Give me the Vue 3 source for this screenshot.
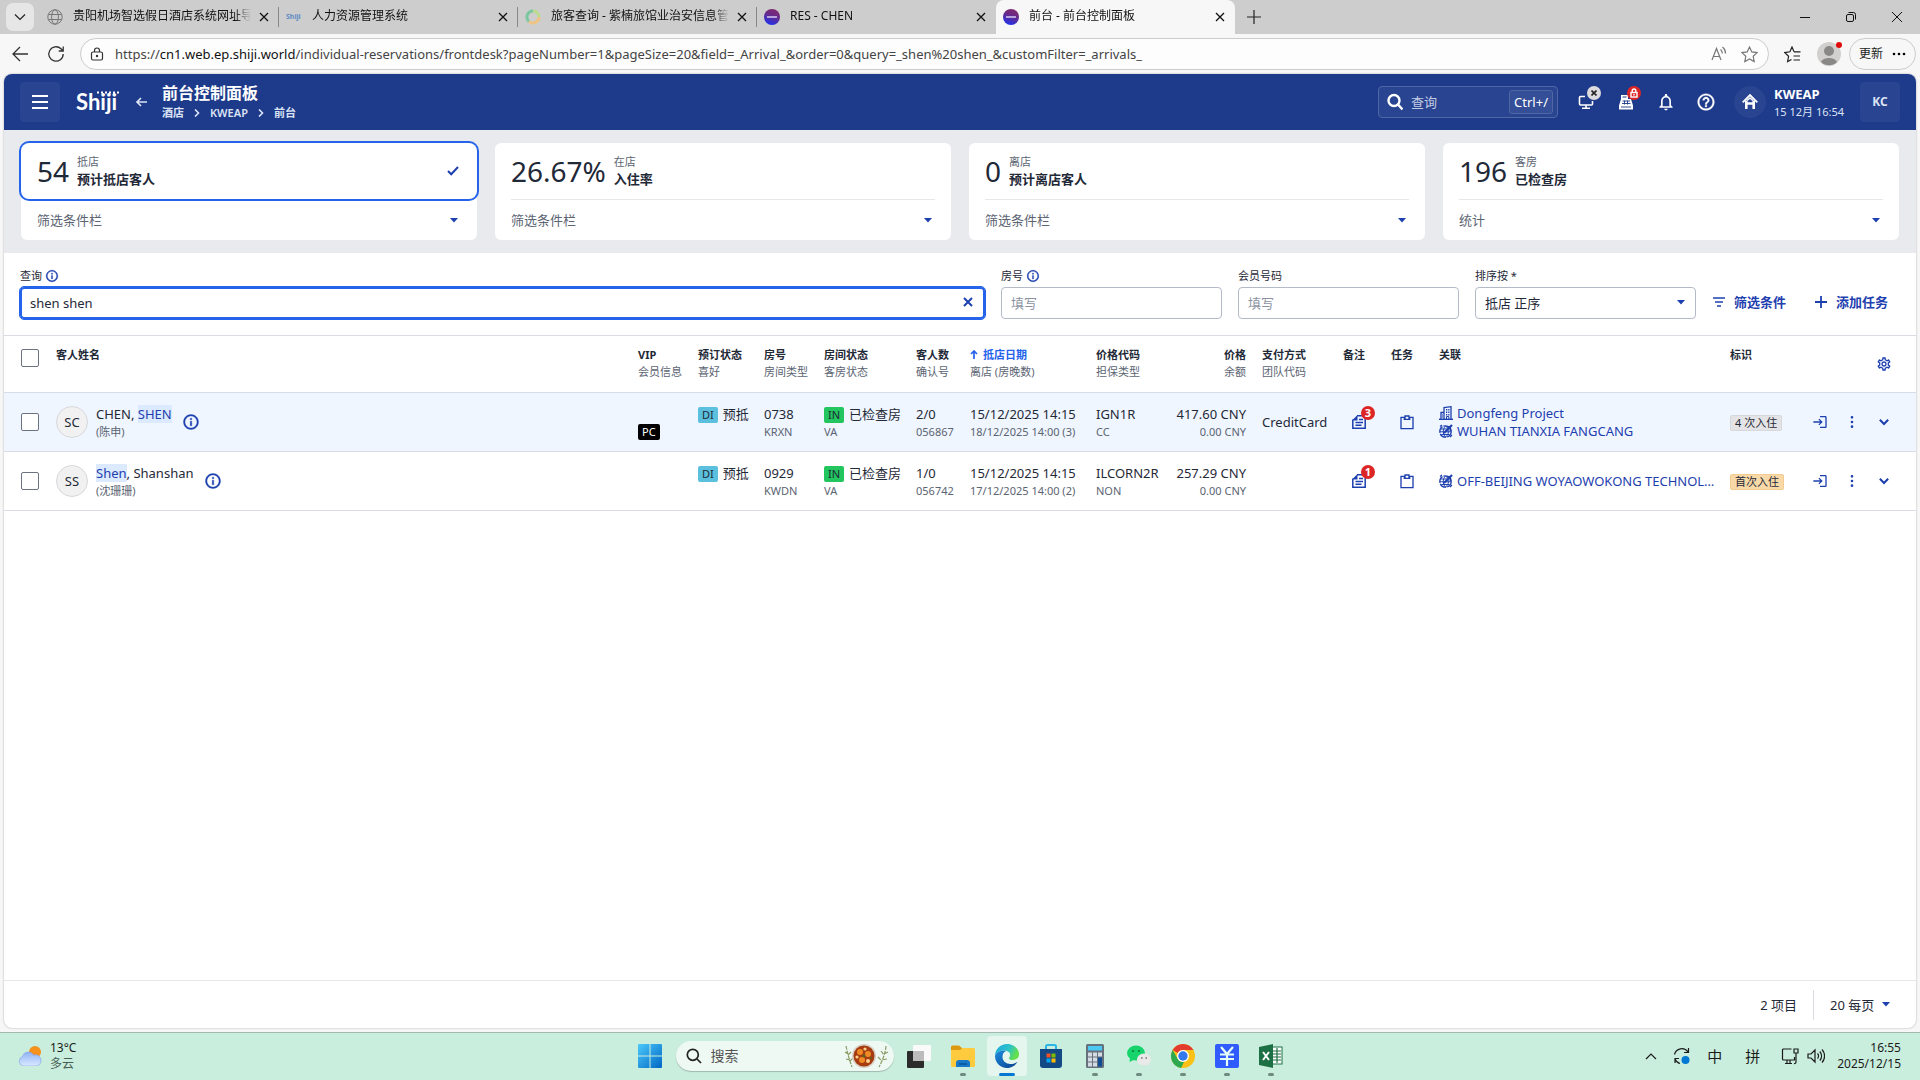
<script setup>
import { ref } from 'vue'

const icons = {
  info: 'M11 7h2v2h-2zm0 4h2v6h-2zm1-9C6.48 2 2 6.48 2 12s4.48 10 10 10 10-4.48 10-10S17.52 2 12 2zm0 18c-4.41 0-8-3.59-8-8s3.59-8 8-8 8 3.59 8 8-3.59 8-8 8z',
  bell: 'M12 22c1.1 0 2-.9 2-2h-4c0 1.1.9 2 2 2zm6-6v-5c0-3.07-1.63-5.64-4.5-6.32V4c0-.83-.67-1.5-1.5-1.5s-1.5.67-1.5 1.5v.68C7.64 5.36 6 7.92 6 11v5l-2 2v1h16v-1l-2-2zm-2 1H8v-6c0-2.48 1.51-4.5 4-4.5s4 2.02 4 4.5v6z',
  help: 'M11 16h2v2h-2zm1-14C6.48 2 2 6.48 2 12s4.48 10 10 10 10-4.48 10-10S17.52 2 12 2zm0 18c-4.41 0-8-3.59-8-8s3.59-8 8-8 8 3.59 8 8-3.59 8-8 8zm0-14c-2.21 0-4 1.79-4 4h2c0-1.1.9-2 2-2s2 .9 2 2c0 2-3 1.75-3 5h2c0-2.25 3-2.5 3-5 0-2.21-1.79-4-4-4z',
  gear: 'M19.43 12.98c.04-.32.07-.64.07-.98 0-.34-.03-.66-.07-.98l2.11-1.65c.19-.15.24-.42.12-.64l-2-3.46c-.09-.16-.26-.25-.44-.25-.06 0-.12.01-.17.03l-2.49 1c-.52-.4-1.08-.73-1.69-.98l-.38-2.65C14.46 2.18 14.25 2 14 2h-4c-.25 0-.46.18-.49.42l-.38 2.65c-.61.25-1.17.59-1.69.98l-2.49-1c-.06-.02-.12-.03-.18-.03-.17 0-.34.09-.43.25l-2 3.46c-.13.22-.07.49.12.64l2.11 1.65c-.04.32-.07.65-.07.98 0 .33.03.66.07.98l-2.11 1.65c-.19.15-.24.42-.12.64l2 3.46c.09.16.26.25.44.25.06 0 .12-.01.17-.03l2.49-1c.52.4 1.08.73 1.69.98l.38 2.65c.03.24.24.42.49.42h4c.25 0 .46-.18.49-.42l.38-2.65c.61-.25 1.17-.59 1.69-.98l2.49 1c.06.02.12.03.18.03.17 0 .34-.09.43-.25l2-3.46c.12-.22.07-.49-.12-.64l-2.11-1.65zm-1.98-1.71c.04.31.05.52.05.73 0 .21-.02.43-.05.73l-.14 1.13.89.7 1.08.84-.7 1.21-1.27-.51-1.04-.42-.9.68c-.43.32-.84.56-1.25.73l-1.06.43-.16 1.13-.2 1.35h-1.4l-.19-1.35-.16-1.13-1.06-.43c-.43-.18-.83-.41-1.23-.71l-.91-.7-1.06.43-1.27.51-.7-1.21 1.08-.84.89-.7-.14-1.13c-.03-.31-.05-.54-.05-.74s.02-.43.05-.73l.14-1.13-.89-.7-1.08-.84.7-1.21 1.27.51 1.04.42.9-.68c.43-.32.84-.56 1.25-.73l1.06-.43.16-1.13.2-1.35h1.39l.19 1.35.16 1.13 1.06.43c.43.18.83.41 1.23.71l.91.7 1.06-.43 1.27-.51.7 1.21-1.07.85-.89.7.14 1.13zM12 8c-2.21 0-4 1.79-4 4s1.79 4 4 4 4-1.79 4-4-1.79-4-4-4zm0 6c-1.1 0-2-.9-2-2s.9-2 2-2 2 .9 2 2-.9 2-2 2z',
  clipboard: 'M2 4h6V2h8v2h6v19H2zM4 6v15h16V6h-3v3H7V6zM10 4v3h4V4z',
  login: 'M11 7 9.600 8.400l2.600 2.600H2v2h10.200l-2.600 2.600L11 17l5-5-5-5zm9 12h-8v2h8c1.100 0 2-.9 2-2V5c0-1.100-.9-2-2-2h-8v2h8v14z',
  chevron: 'M7.400 8 12 12.600 16.600 8 18.500 10 12 16.500 5.500 10z',
  more: 'M12 7a2 2 0 1 0 0-4 2 2 0 0 0 0 4zm0 3a2 2 0 1 0 0 4 2 2 0 0 0 0-4zm0 7a2 2 0 1 0 0 4 2 2 0 0 0 0-4z',
}

const tabs = [
  { title: '贵阳机场智选假日酒店系统网址导航', icon: 'globe' },
  { title: '人力资源管理系统', icon: 'word' },
  { title: '旅客查询 - 紫楠旅馆业治安信息管理系统', icon: 'ring' },
  { title: 'RES - CHEN', icon: 'disc' },
  { title: '前台 - 前台控制面板', icon: 'disc', active: true },
]

const stats = [
  { value: '54', group: '抵店', name: '预计抵店客人', more: '筛选条件栏' },
  { value: '26.67%', group: '在店', name: '入住率', more: '筛选条件栏' },
  { value: '0', group: '离店', name: '预计离店客人', more: '筛选条件栏' },
  { value: '196', group: '客房', name: '已检查房', more: '统计' },
]
const activeStat = ref(0)

const columns = [
  { key: 'vip', top: 'VIP', sub: '会员信息', width: 60 },
  { key: 'status', top: '预订状态', sub: '喜好', width: 66 },
  { key: 'room', top: '房号', sub: '房间类型', width: 60 },
  { key: 'roomStatus', top: '房间状态', sub: '客房状态', width: 92 },
  { key: 'guests', top: '客人数', sub: '确认号', width: 54 },
  { key: 'arrival', top: '抵店日期', sub: '离店 (房晚数)', width: 126, sorted: true },
  { key: 'code', top: '价格代码', sub: '担保类型', width: 76 },
  { key: 'price', top: '价格', sub: '余额', width: 90, right: true },
  { key: 'payment', top: '支付方式', sub: '团队代码', width: 81 },
  { key: 'notes', top: '备注', width: 48 },
  { key: 'tasks', top: '任务', width: 48 },
  { key: 'links', top: '关联', width: 291 },
  { key: 'tags', top: '标识', width: 74 },
]

const rows = [
  {
    id: '056867',
    initials: 'SC',
    name: [{ text: 'CHEN, ' }, { text: 'SHEN', hit: true }],
    localName: '(陈申)',
    vip: 'PC',
    room: '0738',
    roomType: 'KRXN',
    guests: '2/0',
    arrival: '15/12/2025 14:15',
    departure: '18/12/2025 14:00 (3)',
    code: 'IGN1R',
    guarantee: 'CC',
    price: '417.60 CNY',
    payment: 'CreditCard',
    notes: 3,
    links: [
      { icon: 'company', text: 'Dongfeng Project' },
      { icon: 'agent', text: 'WUHAN TIANXIA FANGCANG' },
    ],
    tag: '4 次入住',
    selected: true,
  },
  {
    id: '056742',
    initials: 'SS',
    name: [{ text: 'Shen', hit: true }, { text: ', Shanshan' }],
    localName: '(沈珊珊)',
    room: '0929',
    roomType: 'KWDN',
    guests: '1/0',
    arrival: '15/12/2025 14:15',
    departure: '17/12/2025 14:00 (2)',
    code: 'ILCORN2R',
    guarantee: 'NON',
    price: '257.29 CNY',
    payment: '',
    notes: 1,
    links: [{ icon: 'agent', text: 'OFF-BEIJING WOYAOWOKONG TECHNOLOGY' }],
    tag: '首次入住',
    firstStay: true,
  },
]

const query = ref('shen shen')
const roomNo = ref('')
const memberNo = ref('')
</script>

<template>
  <div class="desktop">
    <div class="tabbar">
      <button class="tab-menu" aria-label="tabs">
        <svg width="12" height="12" viewBox="0 0 12 12"><path d="M1 3.500l5 5 5-5" fill="none" stroke="#222" stroke-width="1.200" /></svg>
      </button>
      <div v-for="(tab, i) in tabs" :key="i" class="tab" :class="{ active: tab.active, nosep: i > 2 }">
        <svg v-if="tab.icon === 'globe'" width="16" height="16" viewBox="0 0 16 16" fill="none" stroke="#777">
          <circle cx="8" cy="8" r="7.200" />
          <ellipse cx="8" cy="8" rx="3.400" ry="7.200" />
          <path d="M1.500 5.500h13M1.500 10.500h13" />
        </svg>
        <span v-else-if="tab.icon === 'word'" class="fav-word">Shiji</span>
        <svg v-else-if="tab.icon === 'ring'" width="16" height="16" viewBox="0 0 16 16" fill="none" stroke-width="3">
          <path d="M8 2a6 6 0 0 0-4 10.500" stroke="#7cc7a0" />
          <path d="M4 12.500A6 6 0 0 0 14 8" stroke="#efc384" />
          <path d="M14 8A6 6 0 0 0 8 2" stroke="#b9dc8e" />
        </svg>
        <span v-else class="fav-disc"></span>
        <span class="tab-title">{{ tab.title }}</span>
        <button class="tab-close" aria-label="close">
          <svg width="10" height="10" viewBox="0 0 10 10"><path d="M1 1l8 8M9 1L1 9" stroke="#111" stroke-width="1.300" /></svg>
        </button>
      </div>
      <button class="tab-new" aria-label="new tab">
        <svg width="14" height="14" viewBox="0 0 14 14"><path d="M7 0v14M0 7h14" stroke="#222" stroke-width="1.200" /></svg>
      </button>
      <div class="win-buttons">
        <button aria-label="minimize"><svg width="10" height="10" viewBox="0 0 10 10"><path d="M0 5.500h10" stroke="#111" /></svg></button>
        <button aria-label="restore">
          <svg width="10" height="10" viewBox="0 0 10 10" fill="none" stroke="#111"><rect x=".5" y="2.500" width="7" height="7" rx="1.500" /><path d="M2.500.5H7.500a2 2 0 0 1 2 2V7.500" /></svg>
        </button>
        <button aria-label="close"><svg width="10" height="10" viewBox="0 0 10 10"><path d="M0 0l10 10M10 0L0 10" stroke="#111" /></svg></button>
      </div>
    </div>

    <div class="toolbar">
      <button class="nav-btn" aria-label="back">
        <svg width="16" height="16" viewBox="0 0 16 16" fill="none" stroke="#333" stroke-width="1.300"><path d="M16 8H1M8 1L1 8l7 7" /></svg>
      </button>
      <button class="nav-btn" aria-label="reload">
        <svg width="18" height="18" viewBox="0 0 18 18" fill="none" stroke="#333" stroke-width="1.300"><path d="M16.200 9A7.200 7.200 0 1 1 14 3.800L16 5.800M16.200 1.500v4.500h-4.500" /></svg>
      </button>
      <div class="address">
        <svg width="14" height="14" viewBox="0 0 14 14" fill="none" stroke="#333" stroke-width="1.200"><rect x="1.500" y="5" width="11" height="8" rx="1.500" /><path d="M4.500 5V3.500a2.500 2.500 0 0 1 5 0V5" /><circle cx="7" cy="9" r=".6" fill="#333" /></svg>
        <span class="url">https://<b>cn1.web.ep.shiji.world</b>/individual-reservations/frontdesk?pageNumber=1&amp;pageSize=20&amp;field=_Arrival_&amp;order=0&amp;query=_shen%20shen_&amp;customFilter=_arrivals_</span>
        <svg width="16" height="16" viewBox="0 0 16 16" fill="none" stroke="#777" stroke-width="1.200"><path d="M1 14L5.500 2.500 10 14M2.500 10.500h6M9.500 3.500a5 5 0 0 1 1.800 4M11.500 1a8 8 0 0 1 3 6.500" /></svg>
        <svg width="17" height="17" viewBox="0 0 17 17" fill="none" stroke="#777" stroke-width="1.200"><path d="M8.500 1l2.300 4.900 5.300.7-3.900 3.700 1 5.300-4.700-2.600-4.700 2.600 1-5.300L.9 6.600l5.300-.7z" /></svg>
      </div>
      <button class="favorites" aria-label="favorites">
        <svg width="17" height="17" viewBox="0 0 17 17" fill="none" stroke="#222" stroke-width="1.200"><path d="M10 5.800L8 1 5.900 5.800.8 6.600l3.800 3.700-1 5.300 3.900-2.100M10 5.800h6.500M9.500 10h6.500M9.500 14h6.500" /></svg>
      </button>
      <button class="profile" aria-label="profile">
        <svg width="24" height="24" viewBox="0 0 24 24"><circle cx="12" cy="12" r="12" fill="#d2d0ce" /><circle cx="12" cy="9" r="5" fill="#8a8886" /><path d="M4 20a8.500 6 0 0 1 16 0 11.500 11.500 0 0 1-16 0z" fill="#8a8886" /></svg>
        <span class="dot"></span>
      </button>
      <button class="update">更新
        <svg width="14" height="4" viewBox="0 0 14 4"><circle cx="2" cy="2" r="1.300" /><circle cx="7" cy="2" r="1.300" /><circle cx="12" cy="2" r="1.300" /></svg>
      </button>
    </div>

    <div class="page">
      <header class="app-header">
        <button class="square" aria-label="menu">
          <svg width="16" height="16" viewBox="0 0 16 16"><path d="M0 2h16M0 8h16M0 14h16" stroke="#fff" stroke-width="2" /></svg>
        </button>
        <div class="logo">
          Shiji
          <svg width="24" height="3" viewBox="0 0 24 3"><path d="M1 1.500h23" stroke="#fff" stroke-width="2" stroke-dasharray="2 2" /></svg>
        </div>
        <button class="back" aria-label="back">
          <svg width="12" height="10" viewBox="0 0 12 10"><path d="M12 5H2M6 1L2 5l4 4" fill="none" stroke="#dbe3f5" stroke-width="1.700" /></svg>
        </button>
        <div class="heading">
          <h1>前台控制面板</h1>
          <nav>
            <a href="#">酒店</a>
            <svg width="6" height="8" viewBox="0 0 6 8"><path d="M1 .5L4.500 4 1 7.500" /></svg>
            <a href="#">KWEAP</a>
            <svg width="6" height="8" viewBox="0 0 6 8"><path d="M1 .5L4.500 4 1 7.500" /></svg>
            <a href="#">前台</a>
          </nav>
        </div>
        <label class="head-search">
          <svg width="16" height="18" viewBox="0 0 16 18" fill="none" stroke="#fff" stroke-width="2.400"><circle cx="7" cy="7.500" r="5.500" /><path d="M11 11.500l4.500 5" /></svg>
          <input type="text" placeholder="查询" aria-label="查询" />
          <kbd>Ctrl+/</kbd>
        </label>
        <div class="head-icons">
          <button aria-label="devices">
            <svg width="16" height="16" viewBox="0 0 16 16" fill="none" stroke="#fff" stroke-width="1.600"><path d="M7 2.500H2.500a1 1 0 0 0-1 1v6.500a1 1 0 0 0 1 1h11a1 1 0 0 0 1-1V7M8 11v3M4 14.200h8" /></svg>
            <span class="mark grey"><svg width="6" height="6" viewBox="0 0 6 6"><path d="M.5.5l5 5M5.500.5l-5 5" stroke="#222" stroke-width="1.600" /></svg></span>
          </button>
          <button aria-label="cashier">
            <svg width="16" height="16" viewBox="0 0 16 16"><path d="M3 1h7v4h3l2 6.500V15.500H1v-4L3 5z" fill="#fff" /><path d="M4.500 3h4" stroke="#1e3a8a" stroke-width="1" /><path d="M4.500 7h7.500M4 9.500h8.500M6.500 6.500v4M9.500 6.500v4M3 13h10" stroke="#1e3a8a" stroke-width=".9" /></svg>
            <span class="mark red"><svg width="8" height="10" viewBox="0 0 8 10" fill="none" stroke="#fff" stroke-width="1.400"><path d="M2.200 4.500V2.800a1.800 1.800 0 0 1 3.600 0v1.700" /><rect x="1" y="4.500" width="6" height="4.500" /><path d="M4 6v1.500" /></svg></span>
          </button>
          <button aria-label="notifications"><svg width="20" height="20" viewBox="0 0 24 24" fill="#fff"><path :d="icons.bell" /></svg></button>
          <button aria-label="help"><svg width="20" height="20" viewBox="0 0 24 24" fill="#fff"><path :d="icons.help" stroke="#fff" stroke-width=".4" /></svg></button>
        </div>
        <div class="hotel">
          <span class="home"><svg width="16" height="16" viewBox="0 0 16 16" fill="none" stroke="#fff"><path d="M.7 8.300L8 1l7.300 7.300" stroke-width="1.800" /><path d="M4.300 6.500V15M11.700 6.500V15M4 9.500h8" stroke-width="2.600" /><path d="M5 6.500L8 4l3 2.500" stroke-width="1.600" /></svg></span>
          <span class="hotel-text"><b>KWEAP</b><span>15 12月 16:54</span></span>
        </div>
        <button class="square user">KC</button>
      </header>

      <section class="stats">
        <article v-for="(s, i) in stats" :key="s.name" class="stat" :class="{ chosen: activeStat === i }">
          <button class="stat-main" @click="activeStat = i">
            <span class="value">{{ s.value }}</span>
            <span class="stat-text"><span>{{ s.group }}</span><b>{{ s.name }}</b></span>
            <svg v-if="activeStat === i" width="12" height="10" viewBox="0 0 12 10"><path d="M1 5l3.200 3.200L11 1" fill="none" stroke="#1e40af" stroke-width="2" /></svg>
          </button>
          <button class="stat-more">
            {{ s.more }}
            <svg width="8" height="5" viewBox="0 0 8 5"><path d="M0 0h8L4 4.500z" fill="#1e40af" /></svg>
          </button>
        </article>
      </section>

      <form class="filters" @submit.prevent>
        <div class="field wide">
          <label for="query">查询 <svg width="14" height="14" viewBox="0 0 24 24" fill="#1e40af"><path :d="icons.info" stroke="#1e40af" stroke-width=".6" /></svg></label>
          <div class="search-box">
            <input id="query" v-model="query" type="text" />
            <button type="button" aria-label="clear" @click="query = ''">
              <svg width="10" height="10" viewBox="0 0 10 10"><path d="M1 1l8 8M9 1L1 9" stroke="#1e40af" stroke-width="2" /></svg>
            </button>
          </div>
        </div>
        <div class="field">
          <label for="room">房号 <svg width="14" height="14" viewBox="0 0 24 24" fill="#1e40af"><path :d="icons.info" stroke="#1e40af" stroke-width=".6" /></svg></label>
          <input id="room" v-model="roomNo" type="text" placeholder="填写" />
        </div>
        <div class="field">
          <label for="member">会员号码</label>
          <input id="member" v-model="memberNo" type="text" placeholder="填写" />
        </div>
        <div class="field">
          <label for="sort">排序按 *</label>
          <div class="select-box">
            <select id="sort"><option>抵店 正序</option></select>
            <svg width="8" height="5" viewBox="0 0 8 5"><path d="M0 0h8L4 4.500z" fill="#1e40af" /></svg>
          </div>
        </div>
        <div class="form-actions">
          <button type="button">
            <svg width="14" height="14" viewBox="0 0 14 14"><path d="M1 3h12M3 7h8M5 11h4" stroke="#1e40af" stroke-width="1.600" /></svg>
            筛选条件
          </button>
          <button type="button">
            <svg width="14" height="14" viewBox="0 0 14 14"><path d="M7 1v12M1 7h12" stroke="#1e40af" stroke-width="1.800" /></svg>
            添加任务
          </button>
        </div>
      </form>

      <table class="grid">
        <colgroup>
          <col style="width: 52px" />
          <col />
          <col v-for="c in columns" :key="c.key" :style="{ width: c.width + 'px' }" />
          <col style="width: 112px" />
        </colgroup>
        <thead>
          <tr>
            <th class="tick"><input type="checkbox" aria-label="select all" /></th>
            <th><b>客人姓名</b></th>
            <th v-for="c in columns" :key="c.key" :class="{ right: c.right, sorted: c.sorted }">
              <b>
                <svg v-if="c.sorted" width="8" height="9" viewBox="0 0 8 9"><path d="M4 9V1M1 4l3-3 3 3" fill="none" stroke="#2563eb" stroke-width="1.700" /></svg>
                {{ c.top }}
              </b>
              <span v-if="c.sub">{{ c.sub }}</span>
            </th>
            <th class="gear"><button aria-label="columns"><svg width="16" height="16" viewBox="0 0 24 24" fill="#1e40af"><path :d="icons.gear" /></svg></button></th>
          </tr>
        </thead>
        <tbody>
          <tr v-for="row in rows" :key="row.id" :class="{ selected: row.selected }">
            <td class="tick"><input type="checkbox" :aria-label="row.initials" /></td>
            <td>
              <div class="guest">
                <span class="avatar">{{ row.initials }}</span>
                <div>
                  <p class="main"><span v-for="part in row.name" :key="part.text" :class="{ hit: part.hit }">{{ part.text }}</span></p>
                  <p class="sub">{{ row.localName }}</p>
                </div>
                <button aria-label="guest info"><svg width="18" height="18" viewBox="0 0 24 24" fill="#1e40af"><path :d="icons.info" stroke="#1e40af" stroke-width=".5" /></svg></button>
              </div>
            </td>
            <td>
              <p class="main"></p>
              <p class="sub"><span v-if="row.vip" class="chip vip">{{ row.vip }}</span></p>
            </td>
            <td>
              <p class="main"><span class="chip due">DI</span>预抵</p>
              <p class="sub"></p>
            </td>
            <td>
              <p class="main">{{ row.room }}</p>
              <p class="sub">{{ row.roomType }}</p>
            </td>
            <td>
              <p class="main"><span class="chip in">IN</span>已检查房</p>
              <p class="sub">VA</p>
            </td>
            <td>
              <p class="main">{{ row.guests }}</p>
              <p class="sub">{{ row.id }}</p>
            </td>
            <td>
              <p class="main">{{ row.arrival }}</p>
              <p class="sub">{{ row.departure }}</p>
            </td>
            <td>
              <p class="main">{{ row.code }}</p>
              <p class="sub">{{ row.guarantee }}</p>
            </td>
            <td class="right">
              <p class="main">{{ row.price }}</p>
              <p class="sub">0.00 CNY</p>
            </td>
            <td><p class="main">{{ row.payment }}</p></td>
            <td>
              <button class="cell-btn" aria-label="notes">
                <svg width="16" height="16" viewBox="0 0 16 16" fill="none" stroke="#1e40af" stroke-width="1.500">
                  <path d="M6 1.800h8.200v12.400H1.800V5.500" />
                  <path d="M6.500 1v5.500H1z" fill="#1e40af" stroke="none" />
                  <path d="M8 5.500h4M4.500 8.500H12M4.500 11.200h6" stroke-width="1.400" />
                </svg>
                <span class="count">{{ row.notes }}</span>
              </button>
            </td>
            <td>
              <button class="cell-btn" aria-label="tasks"><svg width="16" height="16" viewBox="0 0 24 24" fill="#1e40af" fill-rule="evenodd"><path :d="icons.clipboard" /></svg></button>
            </td>
            <td>
              <a v-for="l in row.links" :key="l.text" href="#" class="relation">
                <svg v-if="l.icon === 'company'" width="14" height="14" viewBox="0 0 14 14" fill="none" stroke="#1e40af">
                  <path d="M0 13.300h14" stroke-width="1.400" />
                  <path d="M5 13V1.500L12 .7V13M2 13V6.500h3" stroke-width="1.300" />
                  <path d="M7 3.700h1.300M9.200 3.700h1.300M7 6.200h1.300M9.200 6.200h1.300M7 8.700h1.300M9.200 8.700h1.300" stroke-width="1.400" />
                  <path d="M7.500 13v-2.500h2.300V13M3 9h1M3 11h1" />
                </svg>
                <svg v-else width="14" height="14" viewBox="0 0 14 14" fill="none" stroke="#1e40af">
                  <circle cx="6.500" cy="7.500" r="5.700" stroke-width="1.300" stroke-dasharray="7 1" />
                  <path d="M2 5h7M1 7.800h11M2.500 10.500h8M6.500 2C3.500 5 3.500 10 6.500 13M9 5.500c1 3 0 6-2.500 7.500" />
                  <path d="M5 9L13 1" stroke-width="2.200" />
                  <path d="M7.500 2.800l3.500.4.600 3.800" stroke-width="1.800" />
                  <path d="M1 2.500L3 1M11 13l2-2" stroke-width="1.200" />
                </svg>
                <span>{{ l.text }}</span>
              </a>
            </td>
            <td><span class="tag" :class="{ first: row.firstStay }">{{ row.tag }}</span></td>
            <td>
              <div class="row-actions">
                <button aria-label="check in"><svg width="16" height="16" viewBox="0 0 24 24" fill="#1e40af"><path :d="icons.login" /></svg></button>
                <button aria-label="more"><svg width="16" height="16" viewBox="0 0 24 24" fill="#1e40af"><path :d="icons.more" /></svg></button>
                <button aria-label="expand"><svg width="18" height="18" viewBox="0 0 24 24" fill="#1e40af"><path :d="icons.chevron" /></svg></button>
              </div>
            </td>
          </tr>
        </tbody>
      </table>

      <footer class="pager">
        <span>2 项目</span>
        <div class="page-size">
          <select aria-label="page size"><option>20 每页</option></select>
          <svg width="8" height="5" viewBox="0 0 8 5"><path d="M0 0h8L4 4.500z" fill="#1e40af" /></svg>
        </div>
      </footer>
    </div>

    <div class="taskbar">
      <div class="weather">
        <svg width="24" height="20" viewBox="0 0 24 20">
          <defs>
            <linearGradient id="cloud" x1="0" y1="0" x2="0" y2="1"><stop offset="0" stop-color="#8fb2f5" /><stop offset="1" stop-color="#dbe9ff" /></linearGradient>
          </defs>
          <circle cx="17" cy="6" r="6" fill="#f5921e" />
          <path d="M5 20a5 5 0 0 1-.5-9.500A6 6 0 0 1 15.500 9 5.500 5.500 0 0 1 19 20z" fill="url(#cloud)" stroke="#7da0ea" stroke-width=".6" />
        </svg>
        <div><p>13°C</p><p class="dim">多云</p></div>
      </div>

      <div class="dock">
        <button aria-label="start">
          <svg width="24" height="24" viewBox="0 0 24 24">
            <defs><linearGradient id="win" x1="0" y1="0" x2="1" y2="1"><stop offset="0" stop-color="#4cc9fa" /><stop offset="1" stop-color="#0067c5" /></linearGradient></defs>
            <path d="M0 1a1 1 0 0 1 1-1h10.500v11.500H0zM12.500 0H23a1 1 0 0 1 1 1v10.500H12.500zM0 12.500h11.500V24H1a1 1 0 0 1-1-1zM12.500 12.500H24V23a1 1 0 0 1-1 1H12.500z" fill="url(#win)" />
          </svg>
        </button>
        <label class="task-search">
          <svg width="16" height="16" viewBox="0 0 16 16" fill="none" stroke="#222" stroke-width="1.700"><circle cx="6.800" cy="6.800" r="5.500" /><path d="M11 11l4 4" /></svg>
          <input type="text" placeholder="搜索" aria-label="搜索" />
          <svg width="46" height="26" viewBox="0 0 46 26">
            <g stroke="#8a9a63" stroke-width="1.200" fill="none"><path d="M3 3q2 10 6 21M2 9l3 2M8 9l-3 3M3 16l4 1M10 15l-3 3M43 3q-1 10-7 21M45 9l-4 2M38 8l3 4M44 16l-5 1M35 14l4 4" stroke-dasharray="4 1" /></g>
            <circle cx="21" cy="13" r="12" fill="#d9cfc2" />
            <circle cx="21" cy="13" r="10.500" fill="#a63c12" />
            <g fill="#f08a24"><circle cx="17" cy="9" r="3" /><circle cx="25" cy="11" r="3" /><circle cx="19" cy="17" r="3" /></g>
            <g fill="#ffd28a"><circle cx="22" cy="6" r="1.600" /><circle cx="14" cy="14" r="1.600" /><circle cx="25" cy="18" r="2" /></g>
            <g fill="#4f6b22"><circle cx="21" cy="13" r="1.400" /><circle cx="28" cy="15" r="1" /></g>
          </svg>
        </label>
        <button aria-label="task view">
          <svg width="24" height="24" viewBox="0 0 24 24"><rect x="0" y="7" width="17" height="17" rx="1" fill="#2b2b2b" /><rect x="6" y="1" width="18" height="16" rx="1" fill="#fafafa" /><rect x="6" y="7" width="11" height="10" fill="#bcbcbc" /></svg>
        </button>
        <button aria-label="explorer" class="open">
          <svg width="24" height="24" viewBox="0 0 24 24"><path d="M0 3a1.500 1.500 0 0 1 1.500-1.500H8L11 4v4H0z" fill="#dd9a10" /><path d="M0 6h9l3-2h10.500A1.500 1.500 0 0 1 24 5.500V22a1 1 0 0 1-1 1H1a1 1 0 0 1-1-1z" fill="#fecb3e" /><path d="M5 23v-4a3 3 0 0 1 3-3h8a3 3 0 0 1 3 3v4z" fill="#1778c9" /><path d="M8 20h8" stroke="#0b5394" stroke-width="1.500" /></svg>
        </button>
        <button aria-label="edge" class="open current">
          <svg width="24" height="24" viewBox="0 0 24 24">
            <defs>
              <linearGradient id="edge1" x1="0" y1="0" x2="1" y2=".4"><stop offset="0" stop-color="#1ba5e0" /><stop offset=".6" stop-color="#2cc3c8" /><stop offset="1" stop-color="#66e04a" /></linearGradient>
              <linearGradient id="edge2" x1="0" y1="0" x2="1" y2="1"><stop offset="0" stop-color="#1b8de0" /><stop offset="1" stop-color="#0c3f8c" /></linearGradient>
            </defs>
            <path d="M0 12C0 5 5.500 0 12 0s12 4.500 12 10.200c0 3.800-3 5.800-6 5.800-2.500 0-4-.8-4-1.800 0-.8 1.200-1.200 1.200-3.200C15.200 8 12 6.500 9 6.500 4 6.500.5 9 0 12z" fill="url(#edge1)" />
            <path d="M0 12c.5-3 4-5.500 9-5.500.7 0 1.500.1 2.200.3C8.500 8 7.500 10.500 7.500 13c0 4 3.500 7 8 7 2.500 0 5-.8 7-2.300C20.500 21.500 16.500 24 12 24 5.400 24 0 18.600 0 12z" fill="url(#edge2)" />
          </svg>
        </button>
        <button aria-label="store">
          <svg width="24" height="24" viewBox="0 0 24 24"><path d="M7 6V2.500A1.500 1.500 0 0 1 8.500 1h7A1.500 1.500 0 0 1 17 2.500V6" fill="none" stroke="#2ab7e8" stroke-width="2" /><path d="M1 5h22v16a3 3 0 0 1-3 3H4a3 3 0 0 1-3-3z" fill="#134a86" /><path d="M7.500 9.500h4v4h-4z" fill="#f25022" /><path d="M12.500 9.500h4v4h-4z" fill="#7fba00" /><path d="M7.500 14.500h4v4h-4z" fill="#00a4ef" /><path d="M12.500 14.500h4v4h-4z" fill="#ffb900" /></svg>
        </button>
        <button aria-label="calculator" class="open">
          <svg width="24" height="24" viewBox="0 0 24 24"><rect x="3" width="18" height="24" rx="1.500" fill="#66717c" /><rect x="5" y="2" width="14" height="4.500" fill="#4cc8f4" /><g fill="#d5dbe2"><path d="M5 8.500h4v4H5zM10 8.500h4v4h-4zM15 8.500h4v4h-4zM5 13.500h4v4H5zM10 13.500h4v4h-4zM5 18.500h4v4H5zM10 18.500h4v4h-4z" /></g><path d="M15 13.500h4v9h-4z" fill="#0f4c92" /></svg>
        </button>
        <button aria-label="wechat" class="open">
          <svg width="24" height="24" viewBox="0 0 24 24"><ellipse cx="9" cy="9" rx="9" ry="7.500" fill="#16d46b" /><path d="M3 14l-.5 4 4-2z" fill="#16d46b" /><circle cx="6" cy="7" r="1.100" fill="#0a7d3c" /><circle cx="12" cy="7" r="1.100" fill="#0a7d3c" /><ellipse cx="17" cy="15.500" rx="7" ry="6" fill="#e9e9e9" /><path d="M19 20l3 2v-4z" fill="#e9e9e9" /><circle cx="14.800" cy="14" r=".9" fill="#888" /><circle cx="19.200" cy="14" r=".9" fill="#888" /></svg>
        </button>
        <button aria-label="chrome" class="open">
          <svg width="24" height="24" viewBox="0 0 24 24"><circle cx="12" cy="12" r="12" fill="#fbc116" /><path d="M12 0a12 12 0 0 1 10.400 6H12a6 6 0 0 0-5.200 3L1.600 6A12 12 0 0 1 12 0z" fill="#e33b2e" /><path d="M1.600 6l5.200 9a6 6 0 0 0 6.200 2.900L10 23.900A12 12 0 0 1 1.600 6z" fill="#2da94f" /><circle cx="12" cy="12" r="6" fill="#fff" /><circle cx="12" cy="12" r="4.700" fill="#3478ee" /></svg>
        </button>
        <button aria-label="payments" class="open">
          <svg width="24" height="24" viewBox="0 0 24 24"><rect width="24" height="24" rx="2" fill="#2f5bff" /><path d="M6 3l6 7 6-7M5 10.500h14M5 15h14M12 10v12" fill="none" stroke="#e6fff4" stroke-width="2.200" /></svg>
        </button>
        <button aria-label="excel" class="open">
          <svg width="24" height="24" viewBox="0 0 24 24"><rect x="12" y="3" width="11" height="17" fill="#fff" stroke="#1d7044" /><path d="M13 7h9M13 10h9M13 13h9M13 16h9M18 4v15" stroke="#1d7044" stroke-width="1.200" /><path d="M0 3l14-3v24L0 21z" fill="#1d7044" /><path d="M4 8l6 8M10 8l-6 8" stroke="#fff" stroke-width="2" /></svg>
        </button>
      </div>

      <div class="tray">
        <svg width="12" height="8" viewBox="0 0 12 8"><path d="M1 7l5-5 5 5" /></svg>
        <svg width="18" height="18" viewBox="0 0 18 18"><path d="M1.500 7.500A7.500 7.500 0 0 1 15 5M15.500 1v4.500H11M7 16.500A7.500 7.500 0 0 1 2 12M2 16v-4.500h4" /><circle cx="12.500" cy="13" r="4" class="blue" /></svg>
        <span class="ime">中</span>
        <span class="ime">拼</span>
        <svg width="18" height="18" viewBox="0 0 18 18"><path d="M10.500 2H2.500a1 1 0 0 0-1 1v9a1 1 0 0 0 1 1h11v-3M4 16.500h7M6 13v3.500M9 13v3.500M13 2h4v4h-4zM15 6v9a1.500 1.500 0 0 1-2 1.500" /></svg>
        <svg width="18" height="16" viewBox="0 0 18 16"><path d="M1 6h3l4-4v12l-4-4H1zM10.500 5.500a3.500 3.500 0 0 1 0 5M12.800 3.500a6.500 6.500 0 0 1 0 9M15 1.500a9.500 9.500 0 0 1 0 13" /></svg>
        <div class="clock"><p>16:55</p><p>2025/12/15</p></div>
      </div>
    </div>
  </div>
</template>

<style>
body {
  margin: 0;
}
</style>

<style scoped>
.desktop {
  display: flex;
  flex-direction: column;
  min-height: 100vh;
  background: #f7f7f7;
  color: #1f2937;
  font-family: 'Noto Sans', 'Noto Sans CJK SC', sans-serif;
  font-size: 13px;
  line-height: 20px;
}
.desktop * {
  box-sizing: border-box;
}
button,
input,
select {
  font: inherit;
  color: inherit;
  border: 0;
  padding: 0;
  margin: 0;
  background: none;
}
input,
select {
  outline: none;
  min-width: 0;
}
select {
  appearance: none;
}
p,
h1 {
  margin: 0;
}
svg {
  flex: none;
  display: block;
}
a {
  text-decoration: none;
}

/* browser tabs */
.tabbar {
  display: flex;
  align-items: center;
  height: 34px;
  padding-left: 6px;
  background: #cdcdcd;
  color: #111;
  font-size: 12px;
}
.tab-menu {
  display: grid;
  place-items: center;
  width: 28px;
  height: 28px;
  margin-right: 6px;
  border-radius: 7px;
  background: #e6e6e6;
}
.tab {
  position: relative;
  display: flex;
  align-items: center;
  flex: 0 1 239px;
  min-width: 0;
  height: 34px;
  padding: 0 10px 0 7px;
}
.tab::after {
  content: '';
  position: absolute;
  right: 0;
  top: 7px;
  width: 1px;
  height: 20px;
  background: #888;
}
.tab.nosep::after {
  display: none;
}
.tab.active {
  background: #f7f7f7;
  border-radius: 8px 8px 0 0;
}
.tab-title {
  flex: 1;
  margin: 0 8px 2px 10px;
  overflow: hidden;
  white-space: nowrap;
  mask-image: linear-gradient(to right, #000 calc(100% - 16px), transparent);
}
.fav-word {
  width: 16px;
  color: #5b8ac4;
  font-size: 7px;
  font-weight: 700;
}
.fav-disc {
  width: 16px;
  height: 16px;
  border-radius: 50%;
  background: linear-gradient(#b9a3dc, #b9a3dc) center / 10px 2px no-repeat, linear-gradient(20deg, #1433ff, #6a2a86 60%, #8a2a6a);
}
.tab-new {
  padding: 0 12px;
}
.win-buttons {
  display: flex;
  margin-left: auto;
}
.win-buttons button {
  display: grid;
  place-items: center;
  width: 46px;
  height: 34px;
}

/* address bar */
.toolbar {
  display: flex;
  align-items: center;
  height: 40px;
  padding: 0 4px 0 12px;
}
.nav-btn {
  margin-right: 19px;
}
.nav-btn + .nav-btn {
  margin-right: 15px;
}
.favorites {
  margin-right: 16px;
}
.address {
  display: flex;
  align-items: center;
  flex: 1;
  min-width: 0;
  height: 32px;
  margin-right: 15px;
  padding: 0 10px 0 9px;
  gap: 14px;
  border: 1px solid #ccc;
  border-radius: 16px;
  background: #fdfdfd;
}
.url {
  flex: 1;
  margin-left: -3px;
  overflow: hidden;
  white-space: nowrap;
  color: #444;
}
.url b {
  color: #111;
  font-weight: 400;
}
.profile {
  position: relative;
  margin-right: 8px;
}
.dot {
  position: absolute;
  top: 0;
  right: -1px;
  width: 6px;
  height: 6px;
  border-radius: 50%;
  background: #e00b0b;
}
.update {
  display: flex;
  align-items: center;
  gap: 9px;
  height: 32px;
  padding: 0 9px;
  border: 1px solid #ccc;
  border-radius: 16px;
  color: #222;
  font-size: 12px;
}

/* application */
.page {
  display: flex;
  flex-direction: column;
  flex: 1;
  margin: 0 4px 4px;
  overflow: hidden;
  border-radius: 8px;
  background: #fff;
  box-shadow: 0 0 2px rgba(0, 0, 0, 0.35);
}
.app-header {
  display: flex;
  align-items: center;
  height: 56px;
  padding: 0 16px;
  background: #1e3a8a;
  color: #fff;
}
.square {
  display: grid;
  place-items: center;
  width: 40px;
  height: 40px;
  border-radius: 4px;
  background: #294490;
}
.user {
  color: #dbe3f5;
  font-size: 12px;
  font-weight: 700;
}
.logo {
  position: relative;
  width: 44px;
  margin-left: 16px;
  font-family: 'Liberation Sans Narrow', Lato, sans-serif;
  font-size: 22px;
  font-weight: 700;
}
.logo svg {
  position: absolute;
  top: -1px;
  right: 0;
}
.back {
  margin: 0 15px;
}
.heading {
  padding-top: 1px;
}
h1 {
  font-size: 16px;
  line-height: 20px;
}
nav {
  display: flex;
  align-items: center;
  gap: 10px;
  margin-top: 1px;
  font-size: 11px;
  font-weight: 600;
  line-height: 18px;
}
nav a {
  color: #dbe3f5;
}
nav path {
  fill: none;
  stroke: #dbe3f5;
  stroke-width: 1.6;
}
.head-search {
  display: flex;
  align-items: center;
  width: 180px;
  height: 32px;
  margin-left: auto;
  padding: 0 4px 0 8px;
  border: 1px solid #5067a6;
  border-radius: 4px;
  background: #294490;
}
.head-search input {
  flex: 1;
  margin-left: 8px;
}
.head-search input::placeholder {
  color: #c3cce4;
  opacity: 1;
}
kbd {
  padding: 0 4px;
  border: 1px solid #5067a6;
  border-radius: 3px;
  background: #344e97;
  font: inherit;
  line-height: 22px;
}
.head-icons {
  display: flex;
  margin-left: 8px;
}
.head-icons button {
  position: relative;
  display: grid;
  place-items: center;
  width: 40px;
  height: 40px;
}
.mark {
  position: absolute;
  top: 4px;
  left: 21px;
  display: grid;
  place-items: center;
  width: 14px;
  height: 14px;
  border-radius: 50%;
}
.grey {
  background: #dcdce0;
}
.red {
  background: #dc2626;
}
.hotel {
  display: flex;
  align-items: center;
  gap: 8px;
  margin: 0 16px 0 8px;
}
.home {
  display: grid;
  place-items: center;
  width: 32px;
  height: 32px;
  border-radius: 50%;
  background: #294490;
}
.hotel-text {
  width: 70px;
  padding-top: 1px;
  white-space: nowrap;
  line-height: 18px;
}
.hotel-text b,
.hotel-text span {
  display: block;
}
.hotel-text span {
  color: #dbe3f5;
  font-size: 11px;
}

.stats {
  display: grid;
  grid-template-columns: repeat(4, 1fr);
  gap: 18px;
  padding: 13px 17px;
  background: #e9eaee;
}
.stat {
  border-radius: 6px;
  background: #fff;
}
.stat-main {
  display: flex;
  align-items: center;
  width: 100%;
  height: 56px;
  padding: 0 16px;
  text-align: left;
}
.stat-main svg {
  margin-left: auto;
  margin-right: 2px;
}
.value {
  font-size: 28px;
  line-height: 36px;
}
.stat-text {
  margin-left: 8px;
  line-height: 18px;
}
.stat-text span,
.stat-text b {
  display: block;
}
.stat-text span {
  color: #5b6472;
  font-size: 11px;
  line-height: 16px;
}
.chosen .stat-main {
  border-radius: 8px;
  box-shadow: 0 0 0 2px #2563eb;
}
.stat-more {
  display: flex;
  align-items: center;
  justify-content: space-between;
  width: calc(100% - 32px);
  height: 41px;
  margin: 0 16px;
  padding-right: 3px;
  border-top: 1px solid #e5e7eb;
  color: #5b6472;
}
.chosen .stat-more {
  border-color: transparent;
}

.filters {
  display: flex;
  align-items: flex-end;
  gap: 16px;
  padding: 15px 16px 16px;
  border-bottom: 1px solid #d9dce4;
}
.field {
  width: 221px;
}
.wide {
  flex: 1;
}
.field label {
  display: flex;
  align-items: center;
  gap: 3px;
  margin-bottom: 3px;
  font-size: 11px;
  line-height: 16px;
}
.field input,
.field select {
  display: block;
  width: 100%;
  height: 32px;
  padding: 0 9px;
  border: 1px solid #b4bac8;
  border-radius: 4px;
  background: #fff;
}
.field input::placeholder {
  color: #8b93a1;
  opacity: 1;
}
.search-box,
.select-box {
  position: relative;
}
.field .search-box input {
  padding: 0 32px 0 8px;
  border: 2px solid #2563eb;
  outline: 1px solid #2563eb;
}
.search-box button {
  position: absolute;
  top: 10px;
  right: 12px;
}
.select-box svg {
  position: absolute;
  top: 13px;
  right: 11px;
  pointer-events: none;
}
.form-actions {
  display: flex;
  gap: 28px;
  padding-right: 12px;
}
.form-actions button {
  display: flex;
  align-items: center;
  gap: 8px;
  height: 34px;
  color: #1e40af;
  font-weight: 700;
}

.grid {
  width: 100%;
  table-layout: fixed;
  border-collapse: collapse;
}
th {
  height: 56px;
  padding: 10px 0 0;
  border-bottom: 1px solid #d9dce4;
  text-align: left;
  vertical-align: top;
  white-space: nowrap;
  font-size: 11px;
  font-weight: 400;
  line-height: 17px;
}
th b,
th span {
  display: block;
}
th span {
  color: #5b6472;
}
.sorted b {
  display: flex;
  align-items: center;
  gap: 5px;
  color: #2563eb;
}
.right {
  padding-right: 16px;
  text-align: right;
}
th.tick {
  padding-top: 13px;
}
th.gear {
  padding: 0 24px 0 0;
  vertical-align: middle;
}
.gear button {
  display: block;
  margin-left: auto;
}
td {
  height: 59px;
  padding: 0;
  border-bottom: 1px solid #d9dce4;
  white-space: nowrap;
}
td.right {
  padding-right: 16px;
}
.selected {
  background: #eff6ff;
}
.tick {
  padding-left: 17px;
}
.tick input {
  display: block;
  width: 18px;
  height: 18px;
  appearance: none;
  border: 1px solid #6b7280;
  border-radius: 2px;
  background: #fff;
}
.main {
  min-height: 20px;
  line-height: 20px;
}
.sub {
  min-height: 16px;
  color: #5b6472;
  font-size: 11px;
  line-height: 16px;
}
.guest {
  display: flex;
  align-items: center;
}
.guest .main {
  white-space: pre;
}
.avatar {
  width: 32px;
  height: 32px;
  margin-right: 8px;
  border: 1px solid #d6d8dc;
  border-radius: 50%;
  background: #f1f1f2;
  text-align: center;
  line-height: 30px;
}
.guest button {
  margin-left: 10px;
}
.hit {
  background: #dbeafe;
  color: #1e40af;
}
.chip {
  display: inline-block;
  height: 16px;
  margin-right: 5px;
  padding: 0 4px;
  border-radius: 2px;
  font-size: 11px;
  line-height: 16px;
}
.due {
  background: #5bc0de;
}
.in {
  background: #22c55e;
}
.vip {
  background: #000;
  color: #fff;
}
.cell-btn {
  position: relative;
  display: block;
  margin-left: 8px;
}
.count {
  position: absolute;
  top: -8px;
  left: 10px;
  width: 14px;
  height: 14px;
  border-radius: 50%;
  background: #dc2626;
  color: #fff;
  font-size: 11px;
  font-weight: 700;
  line-height: 14px;
}
.relation {
  display: flex;
  align-items: center;
  gap: 4px;
  padding-right: 8px;
  color: #1e40af;
  line-height: 18px;
}
.relation span {
  overflow: hidden;
  text-overflow: ellipsis;
}
.tag {
  display: inline-block;
  padding: 0 4px;
  border: 1px solid #d6d8dc;
  border-radius: 2px;
  background: #e4e4e6;
  font-size: 11px;
  line-height: 14px;
}
.tag.first {
  border-color: #f3cc90;
  background: #f9d9a8;
}
.row-actions {
  display: flex;
}
.row-actions button {
  display: grid;
  place-items: center;
  width: 32px;
  height: 32px;
}

.pager {
  display: flex;
  align-items: center;
  justify-content: flex-end;
  height: 48px;
  margin-top: auto;
  padding-right: 26px;
  border-top: 1px solid #e5e7eb;
}
.page-size {
  display: flex;
  align-items: center;
  gap: 7px;
  margin-left: 16px;
  padding-left: 16px;
  border-left: 1px solid #d9dce4;
  line-height: 30px;
}
.page-size select {
  height: 30px;
}

/* taskbar */
.taskbar {
  display: grid;
  grid-template-columns: 1fr auto 1fr;
  align-items: center;
  height: 48px;
  padding-bottom: 2px;
  border-top: 1px solid #a3b8ae;
  background: #c9eedd;
  color: #1c1c1c;
  font-size: 12px;
  line-height: 16px;
}
.weather {
  display: flex;
  align-items: center;
  gap: 8px;
  padding-left: 18px;
}
.dim {
  color: #4b5f56;
}
.dock {
  display: flex;
  align-items: center;
}
.dock button {
  position: relative;
  display: grid;
  place-items: center;
  width: 44px;
  height: 40px;
}
.dock .current {
  width: 40px;
  margin: 0 2px;
  border-radius: 4px;
  background: #e4f6ee;
}
.open::after {
  content: '';
  position: absolute;
  bottom: 0;
  left: calc(50% - 3px);
  width: 6px;
  height: 3px;
  border-radius: 2px;
  background: #6f8a7e;
}
.current::after {
  left: calc(50% - 8px);
  width: 16px;
  background: #0078d4;
}
.task-search {
  display: flex;
  align-items: center;
  width: 218px;
  height: 30px;
  margin: 0 3px 0 4px;
  padding: 0 5px 0 10px;
  border-radius: 15px;
  background: #eef9f4;
  box-shadow: 0 1px 1px #9fb8ac;
}
.task-search input {
  flex: 1;
  margin-left: 9px;
  font-size: 14px;
}
.task-search input::placeholder {
  color: #555;
  opacity: 1;
}
.tray {
  display: flex;
  align-items: center;
  justify-content: flex-end;
  gap: 16px;
  padding-right: 19px;
}
.tray svg {
  fill: none;
  stroke: #1c1c1c;
  stroke-width: 1.2;
}
.tray svg:last-of-type {
  margin-left: -8px;
}
.tray .blue {
  fill: #0078d4;
  stroke: none;
}
.ime {
  font-size: 15px;
}
.ime + .ime {
  margin: 0 5px 0 7px;
}
.clock {
  margin-left: -4px;
  text-align: right;
}
</style>
